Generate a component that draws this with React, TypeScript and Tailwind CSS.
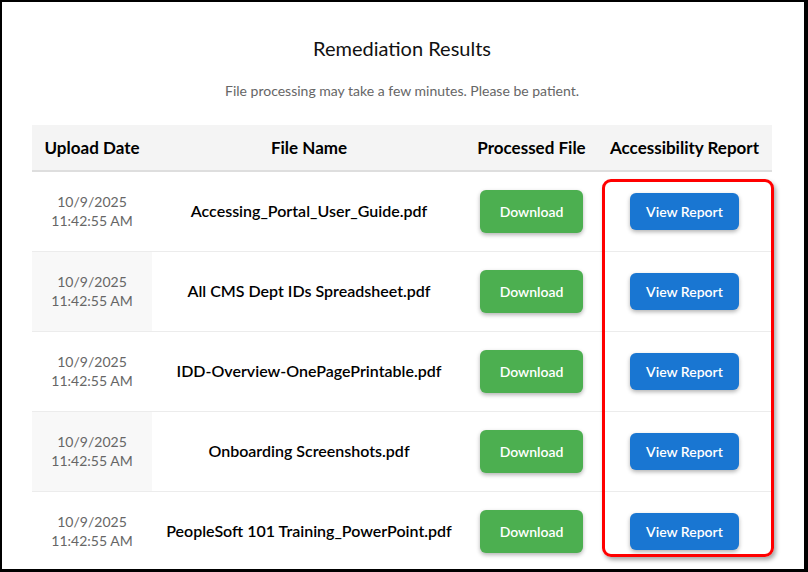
import React from 'react';

interface ResultRow {
  date: string;
  time: string;
  fileName: string;
}

const rows: ResultRow[] = [
  { date: '10/9/2025', time: '11:42:55 AM', fileName: 'Accessing_Portal_User_Guide.pdf' },
  { date: '10/9/2025', time: '11:42:55 AM', fileName: 'All CMS Dept IDs Spreadsheet.pdf' },
  { date: '10/9/2025', time: '11:42:55 AM', fileName: 'IDD-Overview-OnePagePrintable.pdf' },
  { date: '10/9/2025', time: '11:42:55 AM', fileName: 'Onboarding Screenshots.pdf' },
  { date: '10/9/2025', time: '11:42:55 AM', fileName: 'PeopleSoft 101 Training_PowerPoint.pdf' },
];

export default function App() {
  return (
    <div
      className="w-[808px] h-[572px] overflow-hidden bg-white border-black border-l-2 border-t-2 border-r-4 border-b-[3px]"
      style={{ fontFamily: 'Lato, "Open Sans", sans-serif' }}
    >
      <div className="pl-[30px] pt-[32px]">
        <h2 className="w-[740px] text-center text-[20px] leading-[28px] text-[#111]">Remediation Results</h2>
        <p className="w-[740px] mt-[20px] text-center text-[14px] leading-[18px] text-[#666]">
          File processing may take a few minutes. Please be patient.
        </p>

        <div className="relative mt-[25px] w-[740px]">
          <table className="w-[740px] table-fixed border-collapse">
            <colgroup>
              <col className="w-[120px]" />
              <col className="w-[314px]" />
              <col className="w-[131px]" />
              <col className="w-[175px]" />
            </colgroup>
            <thead>
              <tr className="h-[46px] bg-[#f4f4f4] border-b-2 border-[#dedede]">
                <th className="text-[17px] font-bold text-black">Upload Date</th>
                <th className="text-[17px] font-bold text-black">File Name</th>
                <th className="text-[17px] font-bold text-black">Processed File</th>
                <th className="text-[17px] font-bold text-black">Accessibility Report</th>
              </tr>
            </thead>
            <tbody>
              {rows.map((row, i) => (
                <tr key={row.fileName} className="h-[80px] border-b border-[#ececec]">
                  <td className={`text-center text-[14px] leading-[19px] text-[#666] ${i % 2 === 1 ? 'bg-[#f8f8f8]' : ''}`}>
                    <div>{row.date}</div>
                    <div>{row.time}</div>
                  </td>
                  <td className="text-center text-[16px] font-semibold text-black">{row.fileName}</td>
                  <td className="text-center">
                    <button
                      type="button"
                      className="w-[103px] h-[43px] rounded-md bg-[#4caf50] text-white text-[14px] font-semibold shadow-[0_2px_4px_rgba(0,0,0,0.3)]"
                    >
                      Download
                    </button>
                  </td>
                  <td className="text-center">
                    <button
                      type="button"
                      className="w-[109px] h-[37px] rounded-md bg-[#1976d2] text-white text-[14px] font-semibold shadow-[0_2px_4px_rgba(0,0,0,0.3)]"
                    >
                      View Report
                    </button>
                  </td>
                </tr>
              ))}
            </tbody>
          </table>

          {/* highlight box drawn over the report column */}
          <div className="absolute left-[570px] top-[54px] w-[172px] h-[378px] rounded-[9px] border-[3px] border-[#ff0000] shadow-[2px_3px_4px_rgba(0,0,0,0.35)] pointer-events-none" />
        </div>
      </div>
    </div>
  );
}
